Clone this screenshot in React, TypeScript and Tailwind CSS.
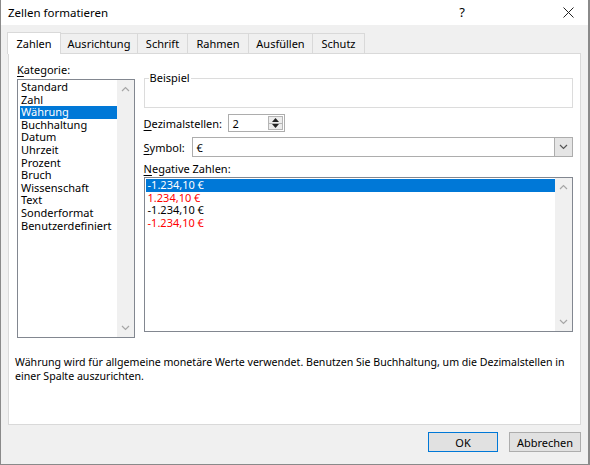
import React from 'react';

const CATEGORIES = [
  'Standard',
  'Zahl',
  'Währung',
  'Buchhaltung',
  'Datum',
  'Uhrzeit',
  'Prozent',
  'Bruch',
  'Wissenschaft',
  'Text',
  'Sonderformat',
  'Benutzerdefiniert',
];

const NEGATIVES = [
  { text: '-1.234,10 €', red: false },
  { text: '1.234,10 €', red: true },
  { text: '-1.234,10 €', red: false },
  { text: '-1.234,10 €', red: true },
];

const TABS = [
  { label: 'Zahlen', w: 'w-[54px]' },
  { label: 'Ausrichtung', w: 'w-[78px]' },
  { label: 'Schrift', w: 'w-[51px]' },
  { label: 'Rahmen', w: 'w-[62px]' },
  { label: 'Ausfüllen', w: 'w-[65px]' },
  { label: 'Schutz', w: 'w-[53px]' },
];

function ChevronUp() {
  return (
    <svg width="9" height="6" viewBox="0 0 9 6" fill="none">
      <path d="M1 5L4.5 1.5L8 5" stroke="#a6a6a6" strokeWidth="1.2" />
    </svg>
  );
}

function ChevronDown({ color = '#a6a6a6' }: { color?: string }) {
  return (
    <svg width="9" height="6" viewBox="0 0 9 6" fill="none">
      <path d="M1 1L4.5 4.5L8 1" stroke={color} strokeWidth="1.2" />
    </svg>
  );
}

function Scrollbar() {
  return (
    <div className="flex w-[17px] flex-col items-center justify-between bg-[#f0f0f0] py-[6px]">
      <ChevronUp />
      <ChevronDown />
    </div>
  );
}

function Underlined({ first, rest }: { first: string; rest: string }) {
  return (
    <span>
      <span className="underline underline-offset-2">{first}</span>
      {rest}
    </span>
  );
}

export default function App() {
  return (
    <div
      className="flex h-[465px] w-[590px] flex-col overflow-hidden border-b border-l border-r-2 border-[#8a8a8a] bg-[#f0f0f0] text-[11px] leading-[13px] text-black"
      style={{ fontFamily: '"Noto Sans", "Open Sans", sans-serif' }}
    >
      {/* title bar */}
      <div className="flex h-[25px] items-center bg-white pl-[7px] pr-[14px]">
        <span className="text-[11.5px]">Zellen formatieren</span>
        <span className="ml-auto mr-[98px] text-[13px]">?</span>
        <svg width="11" height="11" viewBox="0 0 11 11">
          <path d="M0.5 0.5L10.5 10.5M10.5 0.5L0.5 10.5" stroke="#222" strokeWidth="1" />
        </svg>
      </div>

      {/* tabs */}
      <div className="flex h-[28px] items-end pl-[6px] pt-[7px]">
        {TABS.map((t, i) =>
          i === 0 ? (
            <div
              key={t.label}
              className={`relative z-10 -mb-px flex h-[22px] items-center justify-center border border-b-0 border-[#d9d9d9] bg-white ${t.w}`}
            >
              {t.label}
            </div>
          ) : (
            <div
              key={t.label}
              className={`-ml-px flex h-[20px] items-center justify-center border border-b-0 border-[#d9d9d9] bg-[#f0f0f0] ${t.w}`}
            >
              {t.label}
            </div>
          ),
        )}
      </div>

      {/* panel */}
      <div className="mx-[7px] flex h-[372px] flex-col border border-[#d9d9d9] bg-white pl-[8px] pr-[7px] pt-[9px]">
        <div className="flex gap-[9px]">
          {/* Kategorie */}
          <div className="flex w-[118px] flex-col">
            <div className="h-[16px]">
              <Underlined first="K" rest="ategorie:" />
            </div>
            <div className="flex h-[259px] border border-[#828790] bg-white">
              <div className="flex flex-1 flex-col pl-[2px] pt-[1px]">
                {CATEGORIES.map((c) => (
                  <div
                    key={c}
                    className={
                      c === 'Währung'
                        ? 'h-[12.6px] bg-[#0078d7] pl-[1px] leading-[12.6px] text-white'
                        : 'h-[12.6px] pl-[1px] leading-[12.6px]'
                    }
                  >
                    {c}
                  </div>
                ))}
              </div>
              <Scrollbar />
            </div>
          </div>

          {/* right side */}
          <div className="flex w-[431px] flex-col pt-[9px]">
            <fieldset className="h-[36px] border border-[#dcdcdc] px-[4px]">
              <legend className="px-[1px] leading-[12px]">Beispiel</legend>
            </fieldset>

            <div className="mt-[6px] flex items-center">
              <span className="w-[84px]">
                <Underlined first="D" rest="ezimalstellen:" />
              </span>
              <div className="flex h-[18px] w-[57px] border border-[#adadad] bg-white">
                <span className="flex-1 pl-[4px] pt-[2px]">2</span>
                <div className="my-[1px] mr-[1px] flex w-[15px] flex-col border border-[#b5b5b5] bg-[#ececec]">
                  <div className="flex flex-1 items-center justify-center">
                    <svg width="7" height="4" viewBox="0 0 7 4">
                      <path d="M0 4L3.5 0L7 4Z" fill="#222" />
                    </svg>
                  </div>
                  <div className="flex flex-1 items-center justify-center border-t border-[#b5b5b5]">
                    <svg width="7" height="4" viewBox="0 0 7 4">
                      <path d="M0 0L3.5 4L7 0Z" fill="#222" />
                    </svg>
                  </div>
                </div>
              </div>
            </div>

            <div className="mt-[5px] flex items-center">
              <span className="w-[48px]">
                <Underlined first="S" rest="ymbol:" />
              </span>
              <div className="flex h-[20px] flex-1 border border-[#adadad] bg-white">
                <span className="flex-1 pl-[4px] pt-[3px]">€</span>
                <div className="flex w-[18px] items-center justify-center border-l border-[#adadad] bg-[#e5e5e5]">
                  <ChevronDown color="#555" />
                </div>
              </div>
            </div>

            <div className="mt-[5px] h-[15px]">
              <Underlined first="N" rest="egative Zahlen:" />
            </div>
            <div className="flex h-[155px] border border-[#828790] bg-white">
              <div className="flex flex-1 flex-col pl-[1px] pt-[1px]">
                {NEGATIVES.map((n, i) => (
                  <div
                    key={i}
                    className={
                      i === 0
                        ? 'h-[12.7px] bg-[#0078d7] pl-[2px] leading-[12.7px] text-white'
                        : n.red
                          ? 'h-[12.7px] pl-[2px] leading-[12.7px] text-[#ff0000]'
                          : 'h-[12.7px] pl-[2px] leading-[12.7px]'
                    }
                  >
                    {n.text}
                  </div>
                ))}
              </div>
              <Scrollbar />
            </div>
          </div>
        </div>

        <p className="-ml-[2px] mt-[17px] text-[10.6px] leading-[14px]">
          Währung wird für allgemeine monetäre Werte verwendet. Benutzen Sie Buchhaltung, um die
          Dezimalstellen in einer Spalte auszurichten.
        </p>
      </div>

      {/* buttons */}
      <div className="mt-[7px] flex justify-end gap-[11px] pr-[7px]">
        <button className="h-[20px] w-[70px] border border-[#0078d7] bg-[#e1e1e1]">OK</button>
        <button className="h-[20px] w-[72px] border border-[#adadad] bg-[#e1e1e1]">Abbrechen</button>
      </div>
    </div>
  );
}
